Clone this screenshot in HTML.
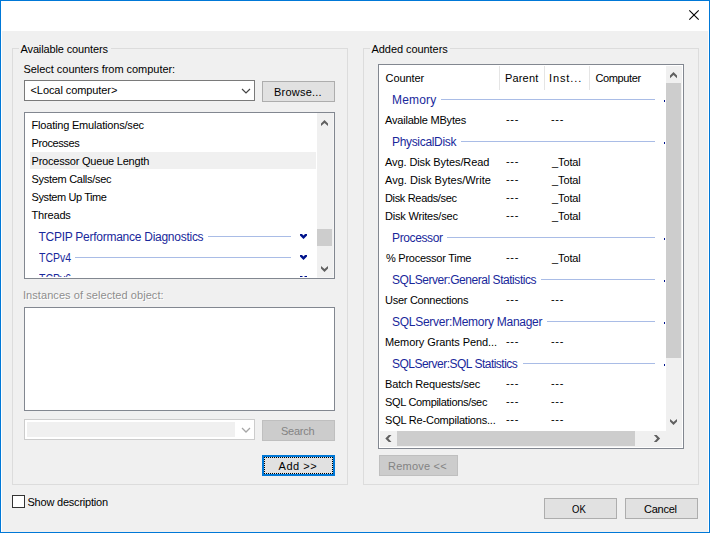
<!DOCTYPE html>
<html><head><meta charset="utf-8"><title>Add Counters</title>
<style>
html,body{margin:0;padding:0;}
body{width:710px;height:533px;overflow:hidden;background:#f0f0f0;position:relative;font-family:"Liberation Sans",sans-serif;}
.t{position:absolute;white-space:pre;line-height:16px;height:16px;color:#000;}
.a{font-size:11.0px;}
.b{font-size:12.0px;}
.x{position:absolute;box-sizing:border-box;}
</style></head>
<body>
<div class="x" style="left:0px;top:0px;width:710px;height:533px;border:1px solid #0078d7;background:#f0f0f0;"></div>
<div class="x" style="left:1px;top:1px;width:708px;height:531px;background:#fff;"></div>
<div class="x" style="left:2px;top:31px;width:706px;height:501px;background:#f0f0f0;"></div>
<div class="x" style="left:12px;top:48px;width:336px;height:437px;border:1px solid #dcdcdc;"></div>
<div class="x" style="left:363px;top:48px;width:336px;height:437px;border:1px solid #dcdcdc;"></div>
<div class="x" style="left:19px;top:44px;width:92px;height:14px;background:#f0f0f0;"></div>
<div class="x" style="left:370px;top:44px;width:80px;height:14px;background:#f0f0f0;"></div>
<div class="x" style="left:24px;top:80px;width:231px;height:21px;border:1px solid #7a7a7a;background:#fff;"></div>
<div class="x" style="left:262px;top:81px;width:73px;height:21px;border:1px solid #adadad;background:#e1e1e1;"></div>
<div class="x" style="left:24px;top:112px;width:311px;height:167px;border:1px solid #828790;background:#fff;"></div>
<div class="x" style="left:30px;top:152px;width:286px;height:17px;background:#f0f0f0;"></div>
<div class="x" style="left:317px;top:113px;width:17px;height:165px;background:#f0f0f0;"></div>
<div class="x" style="left:317px;top:229px;width:15px;height:17px;background:#cdcdcd;"></div>
<div class="x" style="left:208px;top:236px;width:83px;height:1px;background:#a9bce6;"></div>
<div class="x" style="left:75px;top:257px;width:216px;height:1px;background:#a9bce6;"></div>
<div class="x" style="left:24px;top:307px;width:311px;height:104px;border:1px solid #828790;background:#fff;"></div>
<div class="x" style="left:24px;top:419px;width:231px;height:21px;border:1px solid #cccccc;background:#fff;"></div>
<div class="x" style="left:27px;top:422px;width:208px;height:15px;background:#f0f0f0;"></div>
<div class="x" style="left:262px;top:420px;width:73px;height:21px;border:1px solid #bfbfbf;background:#cccccc;"></div>
<div class="x" style="left:262px;top:455px;width:73px;height:21px;border:2px solid #0078d7;background:#e1e1e1;"></div>
<div class="x" style="left:264px;top:457px;width:69px;height:17px;border:1px dotted #000;"></div>
<div class="x" style="left:12px;top:495px;width:13px;height:13px;border:1px solid #333;background:#fff;"></div>
<div class="x" style="left:378px;top:64px;width:306px;height:385px;border:1px solid #828790;background:#fff;"></div>
<div class="x" style="left:499px;top:66px;width:1px;height:24px;background:#e5e5e5;"></div>
<div class="x" style="left:544px;top:66px;width:1px;height:24px;background:#e5e5e5;"></div>
<div class="x" style="left:589px;top:66px;width:1px;height:24px;background:#e5e5e5;"></div>
<div class="x" style="left:441px;top:99px;width:214px;height:1px;background:#a9bce6;"></div>
<div class="x" style="left:664px;top:100px;width:1px;height:2px;background:#00138c;"></div>
<div class="x" style="left:461px;top:141px;width:194px;height:1px;background:#a9bce6;"></div>
<div class="x" style="left:664px;top:142px;width:1px;height:2px;background:#00138c;"></div>
<div class="x" style="left:447px;top:237px;width:208px;height:1px;background:#a9bce6;"></div>
<div class="x" style="left:664px;top:238px;width:1px;height:2px;background:#00138c;"></div>
<div class="x" style="left:541px;top:279px;width:114px;height:1px;background:#a9bce6;"></div>
<div class="x" style="left:664px;top:280px;width:1px;height:2px;background:#00138c;"></div>
<div class="x" style="left:547px;top:321px;width:108px;height:1px;background:#a9bce6;"></div>
<div class="x" style="left:664px;top:322px;width:1px;height:2px;background:#00138c;"></div>
<div class="x" style="left:522.5px;top:363px;width:132.5px;height:1px;background:#a9bce6;"></div>
<div class="x" style="left:664px;top:364px;width:1px;height:2px;background:#00138c;"></div>
<div class="x" style="left:666px;top:66px;width:16px;height:381px;background:#f0f0f0;"></div>
<div class="x" style="left:666px;top:83px;width:15px;height:275px;background:#cdcdcd;"></div>
<div class="x" style="left:380px;top:431px;width:302px;height:16px;background:#f0f0f0;"></div>
<div class="x" style="left:397px;top:431px;width:238px;height:15px;background:#cdcdcd;"></div>
<div class="x" style="left:379px;top:455px;width:79px;height:21px;border:1px solid #bfbfbf;background:#cccccc;"></div>
<div class="x" style="left:544px;top:498px;width:73px;height:21px;border:1px solid #adadad;background:#e1e1e1;"></div>
<div class="x" style="left:625px;top:498px;width:73px;height:21px;border:1px solid #adadad;background:#e1e1e1;"></div>
<div class="t a" style="left:20.50px;top:41.00px;letter-spacing:-0.129px;">Available counters</div>
<div class="t a" style="left:23.50px;top:61.00px;letter-spacing:-0.041px;">Select counters from computer:</div>
<div class="t a" style="left:30.50px;top:82.00px;letter-spacing:-0.080px;">&lt;Local computer&gt;</div>
<div class="t a" style="left:274.00px;top:84.00px;letter-spacing:0.225px;">Browse...</div>
<div class="t a" style="left:31.50px;top:117.00px;letter-spacing:-0.191px;">Floating Emulations/sec</div>
<div class="t a" style="left:31.50px;top:135.00px;letter-spacing:-0.400px;">Processes</div>
<div class="t a" style="left:31.50px;top:153.00px;letter-spacing:-0.210px;">Processor Queue Length</div>
<div class="t a" style="left:31.50px;top:171.00px;letter-spacing:-0.293px;">System Calls/sec</div>
<div class="t a" style="left:31.50px;top:189.00px;letter-spacing:-0.400px;">System Up Time</div>
<div class="t a" style="left:31.50px;top:207.00px;letter-spacing:-0.167px;">Threads</div>
<div class="t b" style="left:38.50px;top:229.00px;letter-spacing:-0.264px;color:#19289b;">TCPIP Performance Diagnostics</div>
<div class="t b" style="left:38.50px;top:250.00px;transform:scaleX(0.8748);transform-origin:0 0;color:#19289b;">TCPv4</div>
<div class="t b" style="left:38.50px;top:271.00px;transform:scaleX(0.8748);transform-origin:0 0;color:#19289b;">TCPv6</div>
<div class="t a" style="left:23.00px;top:287.00px;letter-spacing:0.064px;color:#8e8e8e;text-shadow:1px 1px 0 #fff;">Instances of selected object:</div>
<div class="t a" style="left:281.00px;top:423.00px;letter-spacing:-0.240px;color:#838383;">Search</div>
<div class="t a" style="left:278.50px;top:458.00px;letter-spacing:0.560px;">Add &gt;&gt;</div>
<div class="t a" style="left:27.50px;top:494.00px;letter-spacing:-0.213px;">Show description</div>
<div class="t a" style="left:371.50px;top:41.00px;letter-spacing:-0.062px;">Added counters</div>
<div class="t a" style="left:385.50px;top:70.00px;letter-spacing:-0.067px;">Counter</div>
<div class="t a" style="left:505.00px;top:70.00px;letter-spacing:0.160px;">Parent</div>
<div class="t a" style="left:549.00px;top:70.00px;letter-spacing:0.900px;">Inst...</div>
<div class="t a" style="left:595.50px;top:70.00px;letter-spacing:-0.371px;">Computer</div>
<div class="t b" style="left:392.00px;top:92.00px;letter-spacing:0.160px;color:#19289b;">Memory</div>
<div class="t b" style="left:392.00px;top:134.00px;letter-spacing:-0.327px;color:#19289b;">PhysicalDisk</div>
<div class="t b" style="left:392.00px;top:230.00px;letter-spacing:-0.375px;color:#19289b;">Processor</div>
<div class="t b" style="left:392.00px;top:272.00px;letter-spacing:-0.452px;color:#19289b;">SQLServer:General Statistics</div>
<div class="t b" style="left:392.00px;top:314.00px;letter-spacing:-0.270px;color:#19289b;">SQLServer:Memory Manager</div>
<div class="t b" style="left:392.00px;top:356.00px;letter-spacing:-0.513px;color:#19289b;">SQLServer:SQL Statistics</div>
<div class="t a" style="left:385.00px;top:112.00px;letter-spacing:-0.200px;">Available MBytes</div>
<div class="t a" style="left:506.00px;top:111.00px;letter-spacing:0.700px;">---</div>
<div class="t a" style="left:551.00px;top:111.00px;letter-spacing:0.700px;">---</div>
<div class="t a" style="left:385.00px;top:154.00px;letter-spacing:-0.095px;">Avg. Disk Bytes/Read</div>
<div class="t a" style="left:506.00px;top:153.00px;letter-spacing:0.700px;">---</div>
<div class="t a" style="left:552.00px;top:154.00px;letter-spacing:-0.120px;">_Total</div>
<div class="t a" style="left:385.00px;top:172.00px;letter-spacing:0.030px;">Avg. Disk Bytes/Write</div>
<div class="t a" style="left:506.00px;top:171.00px;letter-spacing:0.700px;">---</div>
<div class="t a" style="left:552.00px;top:172.00px;letter-spacing:-0.120px;">_Total</div>
<div class="t a" style="left:385.00px;top:190.00px;letter-spacing:-0.338px;">Disk Reads/sec</div>
<div class="t a" style="left:506.00px;top:189.00px;letter-spacing:0.700px;">---</div>
<div class="t a" style="left:552.00px;top:190.00px;letter-spacing:-0.120px;">_Total</div>
<div class="t a" style="left:385.00px;top:208.00px;letter-spacing:-0.186px;">Disk Writes/sec</div>
<div class="t a" style="left:506.00px;top:207.00px;letter-spacing:0.700px;">---</div>
<div class="t a" style="left:552.00px;top:208.00px;letter-spacing:-0.120px;">_Total</div>
<div class="t a" style="left:386.00px;top:250.00px;letter-spacing:-0.253px;">% Processor Time</div>
<div class="t a" style="left:506.00px;top:249.00px;letter-spacing:0.700px;">---</div>
<div class="t a" style="left:552.00px;top:250.00px;letter-spacing:-0.120px;">_Total</div>
<div class="t a" style="left:385.00px;top:292.00px;letter-spacing:-0.267px;">User Connections</div>
<div class="t a" style="left:506.00px;top:291.00px;letter-spacing:0.700px;">---</div>
<div class="t a" style="left:551.00px;top:291.00px;letter-spacing:0.700px;">---</div>
<div class="t a" style="left:385.00px;top:334.00px;letter-spacing:-0.080px;">Memory Grants Pend...</div>
<div class="t a" style="left:506.00px;top:333.00px;letter-spacing:0.700px;">---</div>
<div class="t a" style="left:551.00px;top:333.00px;letter-spacing:0.700px;">---</div>
<div class="t a" style="left:385.00px;top:376.00px;letter-spacing:-0.153px;">Batch Requests/sec</div>
<div class="t a" style="left:506.00px;top:375.00px;letter-spacing:0.700px;">---</div>
<div class="t a" style="left:551.00px;top:375.00px;letter-spacing:0.700px;">---</div>
<div class="t a" style="left:385.00px;top:394.00px;letter-spacing:-0.316px;">SQL Compilations/sec</div>
<div class="t a" style="left:506.00px;top:393.00px;letter-spacing:0.700px;">---</div>
<div class="t a" style="left:551.00px;top:393.00px;letter-spacing:0.700px;">---</div>
<div class="t a" style="left:385.00px;top:412.00px;letter-spacing:-0.210px;">SQL Re-Compilations...</div>
<div class="t a" style="left:506.00px;top:411.00px;letter-spacing:0.700px;">---</div>
<div class="t a" style="left:551.00px;top:411.00px;letter-spacing:0.700px;">---</div>
<div class="t a" style="left:388.00px;top:458.00px;letter-spacing:0.225px;color:#838383;">Remove &lt;&lt;</div>
<div class="t a" style="left:572.00px;top:501.00px;transform:scaleX(0.8629);transform-origin:0 0;">OK</div>
<div class="t a" style="left:644.00px;top:501.00px;letter-spacing:-0.240px;">Cancel</div>
<svg class="x" style="left:0;top:0" width="710" height="533" viewBox="0 0 710 533"><line x1="689.3" y1="10.3" x2="698.7" y2="19.7" stroke="#000" stroke-width="1.1"/><line x1="698.7" y1="10.3" x2="689.3" y2="19.7" stroke="#000" stroke-width="1.1"/><polyline points="242,89 246,93 250,89" fill="none" stroke="#444" stroke-width="1.15"/><polyline points="242,428 246,432 250,428" fill="none" stroke="#a6a6a6" stroke-width="1.25"/><polygon points="324.50,119.90 328.00,123.40 328.00,126.10 324.50,122.90 321.00,126.10 321.00,123.40" fill="#606060"/><polygon points="324.50,272.10 328.00,268.60 328.00,265.90 324.50,269.10 321.00,265.90 321.00,268.60" fill="#606060"/><polygon points="300,234.0 302,234.0 303.5,235.5 305,234.0 307,234.0 307,235.4 303.5,238.9 300,235.4" fill="#00138c"/><polygon points="300,255.0 302,255.0 303.5,256.5 305,255.0 307,255.0 307,256.4 303.5,259.9 300,256.4" fill="#00138c"/><polygon points="300,276.0 302,276.0 303.5,277.5 305,276.0 307,276.0 307,277.4 303.5,280.9 300,277.4" fill="#00138c"/><polygon points="673.50,72.10 677.00,75.60 677.00,78.30 673.50,75.10 670.00,78.30 670.00,75.60" fill="#606060"/><polygon points="673.50,425.10 677.00,421.60 677.00,418.90 673.50,422.10 670.00,418.90 670.00,421.60" fill="#606060"/><polygon points="385.30,438.50 388.80,442.00 391.50,442.00 388.30,438.50 391.50,435.00 388.80,435.00" fill="#606060"/><polygon points="660.10,438.50 656.60,442.00 653.90,442.00 657.10,438.50 653.90,435.00 656.60,435.00" fill="#606060"/></svg>
<div class="x" style="left:25px;top:277px;width:292px;height:1px;background:#fff"></div>
<div class="x" style="left:317px;top:277px;width:17px;height:1px;background:#f6f6f6"></div>
<div class="x" style="left:333px;top:113px;width:1px;height:164px;background:#f6f6f6"></div>
<div class="x" style="left:25px;top:278px;width:309px;height:1px;background:#828790"></div>
<div class="x" style="left:25px;top:279px;width:309px;height:10px;background:#f0f0f0"></div>
</body></html>
